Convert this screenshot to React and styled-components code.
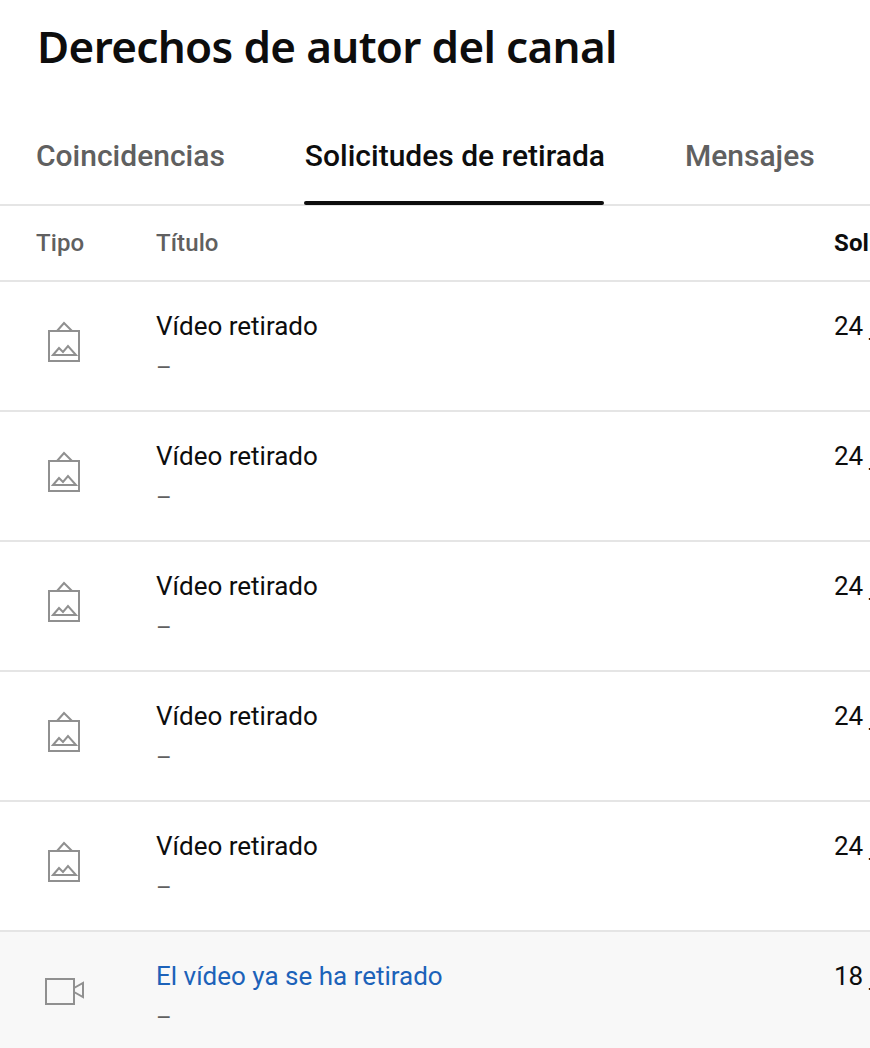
import React from "react";
import styled, { createGlobalStyle } from "styled-components";

const rows = [
  { id: 1, kind: "image", title: "Vídeo retirado", date: "24 jul 2020" },
  { id: 2, kind: "image", title: "Vídeo retirado", date: "24 jul 2020" },
  { id: 3, kind: "image", title: "Vídeo retirado", date: "24 jul 2020" },
  { id: 4, kind: "image", title: "Vídeo retirado", date: "24 jul 2020" },
  { id: 5, kind: "image", title: "Vídeo retirado", date: "24 jul 2020" },
  { id: 6, kind: "video", title: "El vídeo ya se ha retirado", date: "18 jul 2020", link: true },
];

function ImageIcon() {
  return (
    <svg width="44" height="44" viewBox="0 0 44 44" fill="none" stroke="#909090" strokeWidth="2">
      <path d="M5 11H35V41H5Z" />
      <path d="M13 11L20 3L28 11" />
      <path d="M9 35L15 28L19 32L24 26L32 35H9Z" />
    </svg>
  );
}

function VideoIcon() {
  return (
    <svg width="44" height="44" viewBox="0 0 44 44" fill="none" stroke="#909090" strokeWidth="2">
      <path d="M2 9H30V34H2Z" />
      <path d="M30 18L39 13V27L30 22" />
    </svg>
  );
}

export default function App() {
  return (
    <Page>
      <GlobalStyle />
      <Title>Derechos de autor del canal</Title>
      <Tabs>
        <Tab>Coincidencias</Tab>
        <Tab $active>Solicitudes de retirada</Tab>
        <Tab>Mensajes</Tab>
      </Tabs>
      <HeaderRow>
        <HeaderCell>Tipo</HeaderCell>
        <HeaderCell>Título</HeaderCell>
        <HeaderCell $strong>Solicitud</HeaderCell>
      </HeaderRow>
      {rows.map((row) => (
        <Row key={row.id} $highlight={row.link}>
          <IconCell>{row.kind === "image" ? <ImageIcon /> : <VideoIcon />}</IconCell>
          <TitleCell>
            <RowTitle $link={row.link}>{row.title}</RowTitle>
            <Dash>–</Dash>
          </TitleCell>
          <DateCell>{row.date}</DateCell>
        </Row>
      ))}
    </Page>
  );
}

const GlobalStyle = createGlobalStyle`
  html, body {
    margin: 0;
    padding: 0;
    background: #fff;
    overflow: hidden;
  }
  body {
    font-family: Roboto, "Liberation Sans", sans-serif;
  }
`;

const Page = styled.div`
  width: 870px;
  height: 1048px;
  overflow: hidden;
  color: #0d0d0d;
`;

const Title = styled.h1`
  margin: 0;
  padding: 18px 0 0 37px;
  height: 104px;
  box-sizing: border-box;
  font-family: "Noto Sans", sans-serif;
  font-size: 44px;
  line-height: 56px;
  font-weight: 600;
  letter-spacing: -0.66px;
  white-space: nowrap;
`;

const Tabs = styled.div`
  display: flex;
  height: 102px;
  box-sizing: border-box;
  gap: 80px;
  padding-left: 36px;
  border-bottom: 2px solid #e5e5e5;
`;

const Tab = styled.div`
  position: relative;
  padding-top: 34px;
  font-size: 30px;
  line-height: 36px;
  font-weight: 500;
  white-space: nowrap;
  color: ${(p) => (p.$active ? "#0d0d0d" : "#606060")};

  ${(p) =>
    p.$active &&
    `
    &::after {
      content: "";
      position: absolute;
      left: -1px;
      right: 1px;
      bottom: -1px;
      height: 4px;
      border-radius: 2px;
      background: #0d0d0d;
    }
  `}
`;

const HeaderRow = styled.div`
  display: grid;
  grid-template-columns: 156px 678px 200px;
  height: 76px;
  box-sizing: border-box;
  border-bottom: 2px solid #e5e5e5;
  align-items: center;
`;

const HeaderCell = styled.div`
  font-size: 24px;
  font-weight: ${(p) => (p.$strong ? 700 : 500)};
  line-height: 30px;
  letter-spacing: 0.1px;
  white-space: nowrap;
  color: ${(p) => (p.$strong ? "#0d0d0d" : "#606060")};
  &:first-child {
    padding-left: 36px;
  }
`;

const Row = styled.div`
  display: grid;
  grid-template-columns: 156px 678px 200px;
  height: 130px;
  box-sizing: border-box;
  border-bottom: 2px solid #e5e5e5;
  background: ${(p) => (p.$highlight ? "#f8f8f8" : "#fff")};
`;

const IconCell = styled.div`
  padding: 38px 0 0 44px;
  box-sizing: border-box;
  display: flex;
  align-items: flex-start;
`;

const TitleCell = styled.div`
  padding-top: 27px;
  display: flex;
  flex-direction: column;
`;

const RowTitle = styled.div`
  font-size: 26px;
  line-height: 34px;
  white-space: nowrap;
  color: ${(p) => (p.$link ? "#1c62b9" : "#0d0d0d")};
`;

const Dash = styled.div`
  margin-top: 10px;
  font-size: 24px;
  line-height: 30px;
  color: #606060;
`;

const DateCell = styled.div`
  padding-top: 27px;
  font-size: 26px;
  line-height: 34px;
  white-space: nowrap;
`;
